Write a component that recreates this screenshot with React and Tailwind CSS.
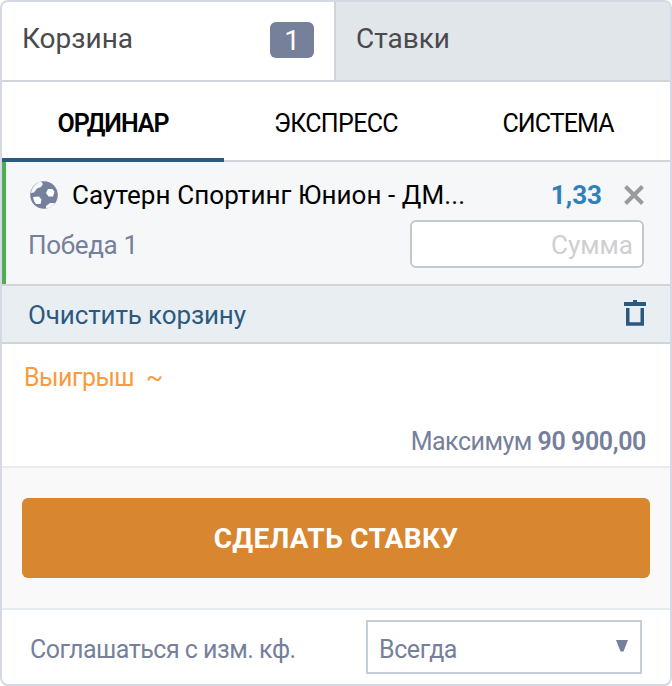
function BallIcon() {
  return (
    <svg className="block h-7 w-7" viewBox="0 0 28 28" aria-hidden="true">
      <circle cx="14" cy="14" r="13.8" fill="#76809a" />
      <path d="M2 8 Q5 2 11 0.5 L13 3 L11 6 L7 7.5 L4 11.5 L1 12 Q1 10 2 8Z" fill="#f5f7f9" />
      <path d="M18 8 L22.5 8 L24.5 11 L23 15.5 L18.5 15.5 L16 12Z" fill="#fdfefe" />
      <path d="M3 16 L9 15.5 L11.5 18.5 L10.5 23 L6 23 Q3.5 20.5 3 16Z" fill="#fdfefe" />
      <path d="M16 25 L20 22 L25 22 Q22 27 16 27.5Z" fill="#f5f7f9" />
    </svg>
  );
}

function TrashIcon() {
  return (
    <svg className="block h-[26px] w-[22px]" viewBox="0 0 22 26" aria-hidden="true">
      <path d="M9 0H13V2H22V6H0V2H9Z" fill="#2a5a80" />
      <path d="M3.75 8V24H18.25V8" fill="none" stroke="#2a5a80" strokeWidth="3.5" />
    </svg>
  );
}

function CloseIcon() {
  return (
    <svg className="block h-5 w-5" viewBox="0 0 20 20" aria-hidden="true">
      <path d="M1.5 1.5L18.5 18.5M18.5 1.5L1.5 18.5" stroke="#999b9d" strokeWidth="4" />
    </svg>
  );
}

function Header() {
  return (
    <header className="flex h-20 border-b-2 border-[#d1d5da] text-[28px] leading-[73px] text-[#4a4a4c]">
      <div className="flex w-[334px] justify-between border-r-2 border-[#d1d5da] pr-5 pl-5">
        <span>Корзина</span>
        <span className="mt-5 h-9 w-11 rounded-md bg-[#76809a] text-center leading-[38px] text-white">1</span>
      </div>
      <div className="flex-1 bg-[#e1e6ea] pl-5">Ставки</div>
    </header>
  );
}

function Tabs() {
  return (
    <nav className="flex h-20 border-b-2 border-[#d1d5da] text-center text-[25px] leading-[84px] text-black">
      <span className="h-20 w-[222px] border-b-4 border-[#2a5a80] font-semibold tracking-[-1px]">ОРДИНАР</span>
      <span className="w-[224px] tracking-[-0.65px]">ЭКСПРЕСС</span>
      <span className="flex-1 pr-0.5 tracking-[-0.9px]">СИСТЕМА</span>
    </nav>
  );
}

function Bet() {
  return (
    <section className="h-[124px] border-b-2 border-[#d1d5da] bg-[#f5f7f9]">
      <div className="h-full border-l-4 border-[#4caf50] pt-[13px] pr-[26px] pl-[22px]">
        <div className="flex h-10 items-center pl-0.5 text-[26px] leading-10">
          <BallIcon />
          <span className="ml-3.5 tracking-[0.08px] text-black">Саутерн Спортинг Юнион - ДМ...</span>
          <span className="mr-[22px] ml-auto font-bold text-[#2f80b9]">1,33</span>
          <CloseIcon />
        </div>
        <div className="mt-[5px] flex h-12 justify-between text-[26px] leading-[50px]">
          <span className="tracking-[-0.35px] text-[#76809a]">Победа 1</span>
          <span className="h-12 w-[234px] rounded-md border-2 border-[#c0c8d4] bg-white pr-[9px] text-right leading-[46px] text-[#cfcfd1]">Сумма</span>
        </div>
      </div>
    </section>
  );
}

export default function App() {
  return (
    <main className="h-[686px] w-[672px] overflow-hidden rounded-lg border-2 border-[#d4d9e3] bg-white font-['Roboto',sans-serif]">
      <Header />
      <Tabs />
      <Bet />
      <div className="flex h-[58px] justify-between border-b-2 border-[#d1d5da] bg-[#e9eef2] pr-6 pl-[26px] text-[26px] leading-[58px] text-[#2a5a80]">
        <span className="tracking-[-0.13px]">Очистить корзину</span>
        <span className="mt-[14px]"><TrashIcon /></span>
      </div>
      <section className="h-[124px] border-b-2 border-[#e7ecf0] pt-0.5 text-[25px] leading-[64px]">
        <div className="flex gap-3 pl-[22px] tracking-[-0.5px] text-[#fb9a3c]">
          <span>Выигрыш</span>
          <span>~</span>
        </div>
        <div className="pr-6 text-right tracking-[-0.5px] text-[#76809a]">
          Максимум <span className="font-semibold tracking-[-0.4px]">90 900,00</span>
        </div>
      </section>
      <section className="h-[142px] border-b-2 border-[#e7ecf0] bg-[#f9f9f9] px-5 pt-[30px]">
        <button className="block h-20 w-[628px] rounded-md bg-[#d88630] pt-0.5 text-[28px] leading-[78px] font-bold tracking-[0.3px] text-white">СДЕЛАТЬ СТАВКУ</button>
      </section>
      <footer className="flex h-[74px] justify-between pr-7 pl-7 text-[25px] leading-[79px] text-[#76809a]">
        <span className="tracking-[-0.5px]">Соглашаться с изм. кф.</span>
        <div className="mt-2.5 flex h-[54px] w-[276px] justify-between border-2 border-[#c5cdd8] pr-3 pl-[11px] leading-[55px]">
          <span className="tracking-[-0.4px]">Всегда</span>
          <svg className="mt-[18px] block h-3 w-3" viewBox="0 0 12 12" aria-hidden="true">
            <path d="M0 0H12L7.5 11.5H4.5Z" fill="#76809a" />
          </svg>
        </div>
      </footer>
    </main>
  );
}
